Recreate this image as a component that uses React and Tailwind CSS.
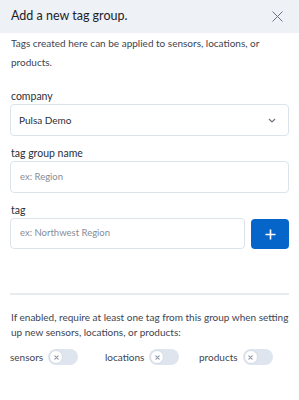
import React from "react";

function Toggle() {
  return (
    <div className="relative w-[30px] h-[16px] rounded-full bg-[#dfe5ee]">
      <div className="absolute left-[1px] top-[1px] w-[14px] h-[14px] rounded-full bg-white border border-[#d5dbe5] flex items-center justify-center">
        <svg width="5" height="5" viewBox="0 0 6 6">
          <path d="M1 1L5 5M5 1L1 5" stroke="#8a94a6" strokeWidth="1.3" strokeLinecap="round" />
        </svg>
      </div>
    </div>
  );
}

function Field({ label, children }) {
  return (
    <div className="flex flex-col">
      <div className="pl-[1px] text-[10.5px] leading-[16px] text-[#2a2f38]">{label}</div>
      {children}
    </div>
  );
}

export default function App() {
  return (
    <div className="w-[299px] h-[400px] bg-white text-[#2a2f38]" style={{ fontFamily: 'Lato, "Noto Sans", sans-serif' }}>
      <div className="h-[33px] bg-[#eef1f6] flex items-center justify-between pl-[11px] pr-[16px]">
        <div className="text-[12.5px] text-[#1c2129]">Add a new tag group.</div>
        <svg width="11" height="11" viewBox="0 0 11 11">
          <path d="M0.5 0.5L10.5 10.5M10.5 0.5L0.5 10.5" stroke="#6b7280" strokeWidth="1" />
        </svg>
      </div>
      <div className="px-[10px]">
        <p className="pt-[1px] pl-[1px] text-[10px] leading-[19px] text-[#3d4451]">
          Tags created here can be applied to sensors, locations, or products.
        </p>
        <div className="mt-[16px] flex flex-col gap-[9px]">
          <Field label="company">
            <div className="h-[32px] rounded-[4px] border border-[#dde3eb] flex items-center justify-between pl-[8px] pr-[12px]">
              <span className="text-[10px] text-[#2a2f38]">Pulsa Demo</span>
              <svg width="8" height="5" viewBox="0 0 8 5">
                <path d="M1 1L4 4L7 1" stroke="#6b7280" strokeWidth="1.2" fill="none" />
              </svg>
            </div>
          </Field>
          <Field label="tag group name">
            <div className="h-[32px] rounded-[4px] border border-[#dde3eb] flex items-center pl-[9px]">
              <span className="text-[9.5px] text-[#858c97]">ex: Region</span>
            </div>
          </Field>
          <Field label="tag">
            <div className="flex gap-[6px]">
              <div className="flex-1 h-[31px] rounded-[4px] border border-[#dde3eb] flex items-center pl-[9px]">
                <span className="text-[9.5px] text-[#858c97]">ex: Northwest Region</span>
              </div>
              <div className="w-[38px] h-[30px] mt-[1px] rounded-[4px] bg-[#0565c9] flex items-center justify-center">
                <svg width="11" height="11" viewBox="0 0 11 11">
                  <path d="M5.5 0.5V10.5M0.5 5.5H10.5" stroke="white" strokeWidth="1.6" />
                </svg>
              </div>
            </div>
          </Field>
        </div>
        <div className="mt-[44px] h-[2px] bg-[#e8ecf1]" />
        <p className="mt-[15px] pl-[1px] text-[10px] leading-[15px] text-[#3d4451]">
          If enabled, require at least one tag from this group when setting up new sensors, locations, or products:
        </p>
        <div className="mt-[9px] flex items-center">
          <div className="w-[95px] flex items-center gap-[5px]">
            <span className="text-[10px] text-[#3d4451]">sensors</span>
            <Toggle />
          </div>
          <div className="w-[94px] flex items-center gap-[5px]">
            <span className="text-[10px] text-[#3d4451]">locations</span>
            <Toggle />
          </div>
          <div className="flex items-center gap-[5px]">
            <span className="text-[10px] text-[#3d4451]">products</span>
            <Toggle />
          </div>
        </div>
      </div>
    </div>
  );
}
